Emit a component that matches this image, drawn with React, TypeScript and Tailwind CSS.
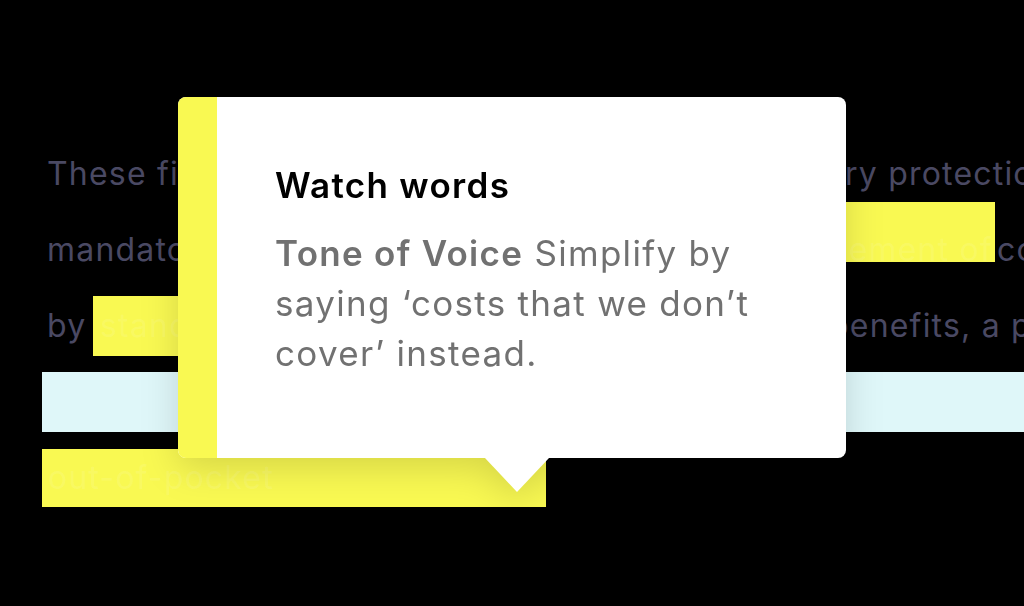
import React from "react";

const faint = "text-[rgba(255,255,255,0.1)]";

export default function App() {
  return (
    <div className="relative w-[1024px] h-[606px] overflow-hidden bg-black font-[Inter,sans-serif]">
      {/* Background paragraph */}
      <div className="pt-[136px] text-[32px] leading-[76px] tracking-[1.2px] text-[#4a4963] whitespace-nowrap">
        {/* row 1 */}
        <div className="flex h-[76px] items-center">
          <div className="ml-[47px] w-[798px] shrink-0 overflow-hidden">These first-dollar costs are not mandato</div>
          <div className="shrink-0">ry protections</div>
        </div>
        {/* row 2 */}
        <div className="flex h-[76px] items-center">
          <div className="ml-[47px] w-[740px] shrink-0 overflow-hidden">mandatory, but they are an ele</div>
          <div className="shrink-0 -translate-y-[18px] h-[60px] w-[208px] bg-[#f9f952] flex items-center justify-end pr-[2px]">
            <span className={faint + " translate-y-[18px]"}>ement of </span>
          </div>
          <div className="ml-[2px] shrink-0">coverage</div>
        </div>
        {/* row 3 */}
        <div className="flex h-[76px] items-center">
          <div className="ml-[47px] w-[46px] shrink-0">by</div>
          <div className="shrink-0 h-[60px] w-[500px] bg-[#f9f952] flex items-center pl-[7px]">
            <span className={faint}>standard plans</span>
          </div>
          <div className="ml-[236px] shrink-0">benefits, a plan</div>
        </div>
        {/* row 4 */}
        <div className="flex h-[76px] items-center">
          <div className="ml-[42px] h-[60px] w-[1000px] shrink-0 bg-[#dff7f9]"></div>
        </div>
        {/* row 5 */}
        <div className="flex h-[76px] items-center">
          <div className="ml-[42px] h-[58px] w-[504px] shrink-0 bg-[#f9f952] flex items-center pl-[6px]">
            <span className={faint}>out-of-pocket</span>
          </div>
        </div>
      </div>

      {/* Tooltip card */}
      <div className="absolute left-[178px] top-[97px] w-[668px] h-[361px] drop-shadow-[0_10px_18px_rgba(0,0,0,0.14)]">
        <div className="flex h-full w-full overflow-hidden rounded-[8px] bg-white">
          <div className="w-[39px] shrink-0 bg-[#f9f952]"></div>
          <div className="pl-[58px] pt-[63px]">
            <div className="text-[35px] leading-[50px] font-semibold text-black tracking-[1.3px]">Watch words</div>
            <p className="mt-[18px] w-[500px] text-[35px] leading-[50px] text-[#717171] tracking-[1.3px]">
              <span className="font-semibold">Tone of Voice</span> Simplify by saying ‘costs that we don’t cover’ instead.
            </p>
          </div>
        </div>
        <div className="absolute left-[307px] top-full h-0 w-0 border-l-[32px] border-r-[32px] border-t-[34px] border-l-transparent border-r-transparent border-t-white"></div>
      </div>
    </div>
  );
}
